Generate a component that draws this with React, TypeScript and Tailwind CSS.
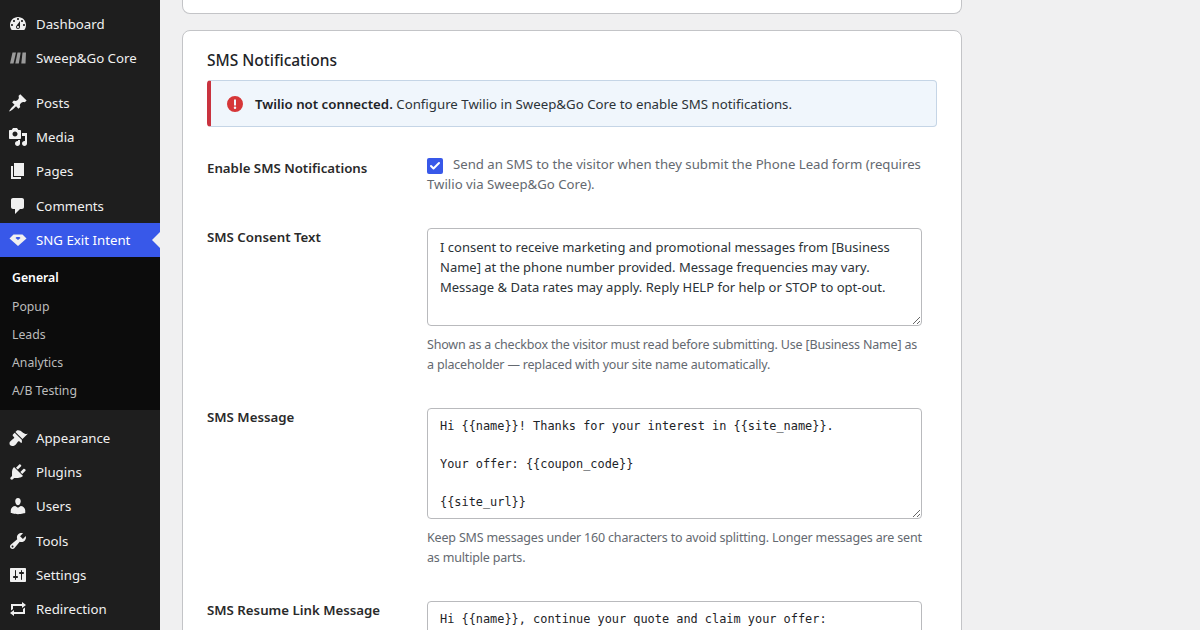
import { Check } from 'lucide-react'

const icons: Record<string, string> = {
  dashboard: 'M3.76 16h12.48c1.1-1.37 1.76-3.11 1.76-5 0-4.42-3.58-8-8-8s-8 3.58-8 8c0 1.89.66 3.63 1.76 5zM10 4c.55 0 1 .45 1 1s-.45 1-1 1-1-.45-1-1 .45-1 1-1zM6 6c.55 0 1 .45 1 1s-.45 1-1 1-1-.45-1-1 .45-1 1-1zm8 0c.55 0 1 .45 1 1s-.45 1-1 1-1-.45-1-1 .45-1 1-1zm-5.37 5.55L12 7v6c0 1.1-.9 2-2 2s-2-.9-2-2c0-.57.24-1.08.63-1.45zM4 10c.55 0 1 .45 1 1s-.45 1-1 1-1-.45-1-1 .45-1 1-1zm12 0c.55 0 1 .45 1 1s-.45 1-1 1-1-.45-1-1 .45-1 1-1zm-5 3c0-.55-.45-1-1-1s-1 .45-1 1 .45 1 1 1 1-.45 1-1z',
  core: 'M4.500 4.500h3.500L5.500 15.500H2zM9.500 4.500h3.200L10.800 15.500H7.300zM14.500 4.500H18l-.5 11h-4.200z',
  post: 'M10.44 3.02l1.82-1.82 6.36 6.35-1.83 1.82c-1.05-.68-2.48-.57-3.41.36l-.75.75c-.92.93-1.04 2.35-.35 3.41l-1.83 1.82-2.41-2.41-2.8 2.79c-.42.42-3.38 2.71-3.8 2.29s1.86-3.39 2.28-3.81l2.79-2.79L4.1 9.36l1.83-1.82c1.05.69 2.48.57 3.4-.36l.75-.75c.93-.92 1.05-2.35.36-3.41z',
  media: 'M13 11V4c0-.55-.45-1-1-1h-1.67L9 1H5L3.67 3H2c-.55 0-1 .45-1 1v7c0 .55.45 1 1 1h10c.55 0 1-.45 1-1zM7 4.500c1.380 0 2.500 1.120 2.500 2.500S8.380 9.500 7 9.500 4.500 8.380 4.500 7 5.620 4.500 7 4.500zM14 6h5v10.500c0 1.380-1.120 2.500-2.500 2.500S14 17.880 14 16.500s1.120-2.500 2.500-2.500c.17 0 .34.02.5.05V9h-3V6zm-4 8.050V13h2v3.500c0 1.380-1.120 2.500-2.500 2.500S7 17.880 7 16.500 8.120 14 9.500 14c.17 0 .34.02.5.05z',
  page: 'M6 15V2h10v13H6zm-1 1h8v2H3V5h2v11z',
  comments: 'M5 2h9c1.100 0 2 .9 2 2v7c0 1.100-.9 2-2 2h-2l-5 5v-5H5c-1.100 0-2-.9-2-2V4c0-1.100.9-2 2-2z',
  gem: 'M5.500 4.500h9L18.500 8.500 10 16 1.500 8.500zM7.500 8l2.500 2 2.500-2-1-1h-3z',
  appearance: 'M14.480 11.060L7.410 3.990l1.500-1.500c.5-.56 2.300-.47 3.510.32 1.210.8 1.430 1.280 2.910 2.100 1.180.64 2.450 1.260 4.450.85zm-.71.71L6.700 4.700 4.930 6.470c-.39.39-.39 1.020 0 1.410l1.060 1.060c.39.39.39 1.030 0 1.420-.6.6-1.430 1.110-2.210 1.690-.35.26-.7.53-1.010.84C1.430 13.230.95 15.940 2.250 17.200c1.270 1.270 3.960.79 5.320-.56.31-.31.58-.66.84-1.010.58-.78 1.090-1.610 1.690-2.210.39-.39 1.030-.39 1.420 0l1.060 1.060c.39.39 1.020.39 1.410 0z',
  plugins: 'M13.110 4.360L9.870 7.600 8 5.730l3.240-3.240c.35-.34 1.050-.2 1.560.32.52.51.66 1.210.31 1.550zm-8 1.770l.91-1.120 9.010 9.010-1.190.84c-.71.71-2.630 1.160-3.820 1.160H6.140L4.900 17.260c-.59.59-1.540.59-2.120 0-.59-.58-.59-1.530 0-2.120l1.240-1.240v-3.880c0-1.130.4-3.190 1.090-3.890zm7.260 3.970l3.240-3.240c.34-.35 1.040-.21 1.550.31.52.51.66 1.210.31 1.550l-3.240 3.250z',
  users: 'M10 9.250c-2.270 0-2.730-3.440-2.730-3.440C7 4.020 7.820 2 9.970 2c2.160 0 2.980 2.020 2.710 3.810 0 0-.41 3.440-2.680 3.440zm0 2.570L12.720 10c2.390 0 4.520 2.330 4.520 4.530v2.490s-3.650 1.130-7.240 1.130c-3.650 0-7.240-1.130-7.240-1.130v-2.490c0-2.250 1.940-4.480 4.470-4.480z',
  tools: 'M16.680 9.770c-1.340 1.340-3.300 1.670-4.950.99l-5.410 6.520c-.99.99-2.590.99-3.580 0s-.99-2.590 0-3.570l6.520-5.420c-.68-1.650-.35-3.610.99-4.950 1.280-1.280 3.120-1.620 4.720-1.060l-2.890 2.890 2.820 2.820 2.860-2.870c.53 1.580.18 3.390-1.080 4.650zM3.810 16.210c.4.39 1.040.39 1.430 0 .4-.4.4-1.040 0-1.430-.39-.4-1.030-.4-1.430 0-.39.39-.39 1.030 0 1.430z',
  settings: 'M18 16V4c0-.55-.45-1-1-1H3c-.55 0-1 .45-1 1v12c0 .55.45 1 1 1h14c.55 0 1-.45 1-1zM8 11h1c.55 0 1 .45 1 1s-.45 1-1 1H8v1.500c0 .28-.22.5-.5.5s-.5-.22-.5-.5V13H6c-.55 0-1-.45-1-1s.45-1 1-1h1V5.500c0-.28.22-.5.5-.5s.5.22.5.5V11zm5-2h-1c-.55 0-1-.45-1-1s.45-1 1-1h1V5.500c0-.28.22-.5.5-.5s.5.22.5.5V7h1c.55 0 1 .45 1 1s-.45 1-1 1h-1v5.500c0 .28-.22.5-.5.5s-.5-.22-.5-.5V9z',
  repeat: 'M5 7v3l-2 1.500V5h11V3l4 3.010L14 9V7H5zm10 6v-3l2-1.500V15H6v2l-4-3.010L6 11v2h9z',
}

const MenuIcon = ({ name }: { name: string }) => (
  <svg viewBox="0 0 20 20" className={`w-5 h-5 shrink-0 ${name === 'core' ? 'fill-[#9a9a9a]' : 'fill-[#f0f0f0]'}`}>
    <path fillRule="evenodd" d={icons[name]} />
  </svg>
)

const MenuItem = ({ icon, label, active }: { icon: string; label: string; active?: boolean }) => (
  <div className={`relative h-[34.25px] flex items-center pl-[8px] gap-[8px] text-[13.25px] text-[#f0f0f0] ${active ? 'bg-[#3858e9] text-white' : ''}`}>
    <MenuIcon name={icon} />
    <span className="pt-[2px]">{label}</span>
    {active && (
      <span className="absolute right-0 top-[9px] border-y-[8px] border-r-[8px] border-y-transparent border-r-[#f0f0f1]" />
    )}
  </div>
)

const FieldLabel = ({ children }: { children: string }) => (
  <div className="text-[13.25px] font-semibold text-[#2a2a2a]">{children}</div>
)

const Hint = ({ children }: { children: string }) => (
  <p className="mt-[9px] text-[12.5px] tracking-[-0.18px] leading-[20px] text-[#646970]">{children}</p>
)

const smsConsent = 'I consent to receive marketing and promotional messages from [Business Name] at the phone number provided. Message frequencies may vary. Message & Data rates may apply. Reply HELP for help or STOP to opt-out.'
const smsMessage = 'Hi {{name}}! Thanks for your interest in {{site_name}}.\n\nYour offer: {{coupon_code}}\n\n{{site_url}}'
const smsResume = 'Hi {{name}}, continue your quote and claim your offer:\n{{resume_url}}'

export default function App() {
  return (
    <div className="h-[630px] w-[1200px] overflow-hidden flex bg-[#f0f0f1] font-['Noto_Sans',sans-serif]">
      <aside className="w-[160px] shrink-0 bg-[#1e1e1e] pt-[7px]">
        <MenuItem icon="dashboard" label="Dashboard" />
        <MenuItem icon="core" label="Sweep&Go Core" />
        <div className="h-[10.3px]" />
        <MenuItem icon="post" label="Posts" />
        <MenuItem icon="media" label="Media" />
        <MenuItem icon="page" label="Pages" />
        <MenuItem icon="comments" label="Comments" />
        <MenuItem icon="gem" label="SNG Exit Intent" active />
        <div className="bg-[#0c0c0c] h-[153px] pt-[7px] pl-[12px] text-[12.25px] text-[#bcbcbc] flex flex-col">
          <div className="h-[29px] flex items-center font-semibold text-white">General</div>
          <div className="h-[28px] flex items-center">Popup</div>
          <div className="h-[28px] flex items-center">Leads</div>
          <div className="h-[28px] flex items-center">Analytics</div>
          <div className="h-[28px] flex items-center">A/B Testing</div>
        </div>
        <div className="h-[10.7px]" />
        <MenuItem icon="appearance" label="Appearance" />
        <MenuItem icon="plugins" label="Plugins" />
        <MenuItem icon="users" label="Users" />
        <MenuItem icon="tools" label="Tools" />
        <MenuItem icon="settings" label="Settings" />
        <MenuItem icon="repeat" label="Redirection" />
      </aside>

      <main className="w-[780px] ml-[22px] shrink-0">
        <div className="h-[14px] bg-white border border-t-0 border-[#c3c4c7] rounded-b-[8px]" />
        <section className="mt-[16px] bg-white border border-[#c3c4c7] rounded-[8px] pt-[18px] px-[24px] h-[640px]">
          <h2 className="text-[15.5px] leading-[22px] font-medium text-[#1d2327]">SMS Notifications</h2>

          <div className="mt-[9px] h-[47px] flex items-center gap-[12px] bg-[#f0f6fc] border border-[#c5d5e6] border-l-[4px] border-l-[#c9333f] rounded-[4px] pl-[16px] text-[13.25px] text-[#2c3338]">
            <svg viewBox="0 0 16 16" className="w-4 h-4 shrink-0 fill-[#d63638]">
              <path fillRule="evenodd" d="M8 0a8 8 0 1 1 0 16A8 8 0 0 1 8 0zM7 3.500h2V9.500H7zM8 10.500a1.250 1.250 0 1 1 0 2.500 1.250 1.250 0 0 1 0-2.500z" />
            </svg>
            <span className="pt-[2px]"><strong className="font-semibold text-[#1d2327]">Twilio not connected.</strong> Configure Twilio in Sweep&amp;Go Core to enable SMS notifications.</span>
          </div>

          <div className="mt-[27px] grid grid-cols-[220px_495px]">
            <div className="pt-[5px]"><FieldLabel>Enable SMS Notifications</FieldLabel></div>
            <p className="text-[13.2px] leading-[20px] text-[#646970]">
              <span className="inline-flex align-[-3px] mr-[10px] w-4 h-4 rounded-[2px] bg-[#3858e9] items-center justify-center">
                <Check className="w-3 h-3 text-white" strokeWidth={4} />
              </span>
              Send an SMS to the visitor when they submit the Phone Lead form (requires Twilio via Sweep&amp;Go Core).
            </p>
          </div>

          <div className="mt-[34px] grid grid-cols-[220px_495px]">
            <FieldLabel>SMS Consent Text</FieldLabel>
            <div>
              <textarea
                readOnly
                defaultValue={smsConsent}
                className="block w-[495px] h-[98px] bg-white border border-[#b9babd] rounded-[4px] px-[12px] pt-[8px] text-[13px] leading-[20px] text-[#2c3338] outline-none"
              />
              <Hint>Shown as a checkbox the visitor must read before submitting. Use [Business Name] as a placeholder — replaced with your site name automatically.</Hint>
            </div>
          </div>

          <div className="mt-[33px] grid grid-cols-[220px_495px]">
            <FieldLabel>SMS Message</FieldLabel>
            <div>
              <textarea
                readOnly
                defaultValue={smsMessage}
                className="block w-[495px] h-[111px] bg-white border border-[#b9babd] rounded-[4px] px-[12px] pt-[8px] font-['DejaVu_Sans_Mono',monospace] text-[11.9px] leading-[19px] text-[#1d2327] outline-none overflow-hidden"
              />
              <Hint>Keep SMS messages under 160 characters to avoid splitting. Longer messages are sent as multiple parts.</Hint>
            </div>
          </div>

          <div className="mt-[33px] grid grid-cols-[220px_495px]">
            <FieldLabel>SMS Resume Link Message</FieldLabel>
            <textarea
              readOnly
              defaultValue={smsResume}
              className="block w-[495px] h-[111px] bg-white border border-[#b9babd] rounded-[4px] px-[12px] pt-[8px] font-['DejaVu_Sans_Mono',monospace] text-[11.9px] leading-[19px] text-[#1d2327] outline-none overflow-hidden"
            />
          </div>
        </section>
      </main>
    </div>
  )
}
